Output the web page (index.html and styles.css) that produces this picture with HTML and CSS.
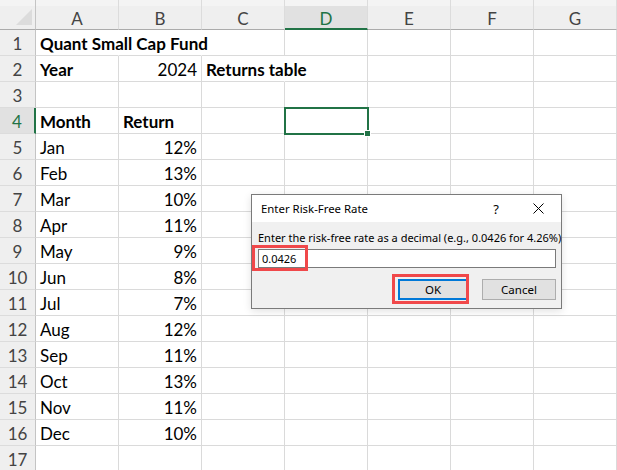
FILE: index.html
```html
<!DOCTYPE html>
<html>
<head>
<meta charset="utf-8">
<link rel="stylesheet" href="styles.css">
</head>
<body>
<div class="sheet">
  <div class="corner"><span class="tri"></span></div>
  <div class="ch">A</div><div class="ch">B</div><div class="ch">C</div><div class="ch sel">D</div><div class="ch">E</div><div class="ch">F</div><div class="ch">G</div>

  <div class="rh">1</div><div class="c b nr">Quant Small Cap Fund</div><div class="c nr"></div><div class="c"></div><div class="c"></div><div class="c"></div><div class="c"></div><div class="c"></div>
  <div class="rh">2</div><div class="c b">Year</div><div class="c r">2024</div><div class="c b nr">Returns table</div><div class="c"></div><div class="c"></div><div class="c"></div><div class="c"></div>
  <div class="rh">3</div><div class="c"></div><div class="c"></div><div class="c"></div><div class="c"></div><div class="c"></div><div class="c"></div><div class="c"></div>
  <div class="rh sel">4</div><div class="c b">Month</div><div class="c b">Return</div><div class="c"></div><div class="c active"></div><div class="c"></div><div class="c"></div><div class="c"></div>
  <div class="rh">5</div><div class="c">Jan</div><div class="c r">12%</div><div class="c"></div><div class="c"></div><div class="c"></div><div class="c"></div><div class="c"></div>
  <div class="rh">6</div><div class="c">Feb</div><div class="c r">13%</div><div class="c"></div><div class="c"></div><div class="c"></div><div class="c"></div><div class="c"></div>
  <div class="rh">7</div><div class="c">Mar</div><div class="c r">10%</div><div class="c"></div><div class="c"></div><div class="c"></div><div class="c"></div><div class="c"></div>
  <div class="rh">8</div><div class="c">Apr</div><div class="c r">11%</div><div class="c"></div><div class="c"></div><div class="c"></div><div class="c"></div><div class="c"></div>
  <div class="rh">9</div><div class="c">May</div><div class="c r">9%</div><div class="c"></div><div class="c"></div><div class="c"></div><div class="c"></div><div class="c"></div>
  <div class="rh">10</div><div class="c">Jun</div><div class="c r">8%</div><div class="c"></div><div class="c"></div><div class="c"></div><div class="c"></div><div class="c"></div>
  <div class="rh">11</div><div class="c">Jul</div><div class="c r">7%</div><div class="c"></div><div class="c"></div><div class="c"></div><div class="c"></div><div class="c"></div>
  <div class="rh">12</div><div class="c">Aug</div><div class="c r">12%</div><div class="c"></div><div class="c"></div><div class="c"></div><div class="c"></div><div class="c"></div>
  <div class="rh">13</div><div class="c">Sep</div><div class="c r">11%</div><div class="c"></div><div class="c"></div><div class="c"></div><div class="c"></div><div class="c"></div>
  <div class="rh">14</div><div class="c">Oct</div><div class="c r">13%</div><div class="c"></div><div class="c"></div><div class="c"></div><div class="c"></div><div class="c"></div>
  <div class="rh">15</div><div class="c">Nov</div><div class="c r">11%</div><div class="c"></div><div class="c"></div><div class="c"></div><div class="c"></div><div class="c"></div>
  <div class="rh">16</div><div class="c">Dec</div><div class="c r">10%</div><div class="c"></div><div class="c"></div><div class="c"></div><div class="c"></div><div class="c"></div>
  <div class="rh">17</div><div class="c"></div><div class="c"></div><div class="c"></div><div class="c"></div><div class="c"></div><div class="c"></div><div class="c"></div>
</div>

<div class="dialog">
  <div class="titlebar">
    <span class="title">Enter Risk-Free Rate</span>
    <span class="help">?</span>
    <svg class="close" width="11" height="11" viewBox="0 0 11 11"><path d="M0.5 0.5 L10.5 10.5 M10.5 0.5 L0.5 10.5" stroke="#000" stroke-width="1" fill="none"/></svg>
  </div>
  <div class="dbody">
    <div class="label">Enter the risk-free rate as a decimal (e.g., 0.0426 for 4.26%)</div>
    <div class="input">0.0426</div>
    <div class="buttons">
      <div class="btn default">OK</div>
      <div class="btn">Cancel</div>
    </div>
  </div>
  <div class="mark mark-input"></div>
  <div class="mark mark-ok"></div>
</div>
</body>
</html>
```

FILE: styles.css
```css
html, body {
  margin: 0;
  padding: 0;
  background: #fff;
  overflow: hidden;
}
body {
  width: 617px;
  height: 470px;
  position: relative;
}
.sheet {
  display: grid;
  grid-template-columns: 36px repeat(7, 83px);
  grid-template-rows: 30px repeat(17, 26px);
  font-family: Lato, "Liberation Sans", sans-serif;
  font-size: 17px;
  color: #000;
}
.corner {
  background: linear-gradient(#f4f4f4 0 6px, #efefef 6px);
  border-right: 1px solid #c4c4c4;
  border-bottom: 1px solid #ababab;
  box-sizing: border-box;
  position: relative;
}
.tri {
  position: absolute;
  right: 3px;
  bottom: 4px;
  width: 0;
  height: 0;
  border-left: 16px solid transparent;
  border-bottom: 16px solid #dcdcdc;
}
.ch {
  background: linear-gradient(#f4f4f4 0 6px, #efefef 6px);
  border-right: 1px solid #dcdcdc;
  border-bottom: 1px solid #ababab;
  box-sizing: border-box;
  display: flex;
  align-items: center;
  justify-content: center;
  padding-top: 8px;
  color: #444;
  font-size: 17px;
}
.ch.sel {
  background: linear-gradient(#f4f4f4 0 6px, #e1e1e1 6px);
  border-bottom: 2px solid #217346;
  color: #217346;
  padding-top: 9px;
}
.rh {
  background: #efefef;
  border-right: 1px solid #c4c4c4;
  border-bottom: 1px solid #dcdcdc;
  box-sizing: border-box;
  display: flex;
  align-items: flex-end;
  justify-content: center;
  padding-bottom: 1px;
  color: #444;
}
.rh.sel {
  background: #e1e1e1;
  border-right: 2px solid #217346;
  color: #217346;
}
.c {
  border-right: 1px solid #dadada;
  border-bottom: 1px solid #dadada;
  box-sizing: border-box;
  display: flex;
  align-items: flex-end;
  padding: 0 3px 1px 4px;
  white-space: nowrap;
  overflow: visible;
}
.c.nr { border-right-color: transparent; }
.c.b { font-weight: 700; }
.c.r { justify-content: flex-end; padding-right: 4px; }
.c.active {
  outline: 2px solid #217346;
  outline-offset: -1px;
  position: relative;
}
.c.active::after {
  content: "";
  position: absolute;
  right: -4px;
  bottom: -4px;
  width: 5px;
  height: 5px;
  background: #217346;
  border: 1px solid #fff;
}

.dialog {
  position: absolute;
  left: 251px;
  top: 194px;
  width: 311px;
  height: 115px;
  box-sizing: border-box;
  border: 1px solid #7a7a7a;
  background: #f0f0f0;
  font-family: "Noto Sans", "Open Sans", sans-serif;
  font-size: 11px;
  color: #000;
  box-shadow: 0 2px 8px rgba(0,0,0,0.12);
}
.titlebar {
  height: 27px;
  background: #fff;
  display: flex;
  align-items: center;
  padding-left: 9px;
  padding-right: 17px;
}
.title { flex: 1; font-size: 11.4px; }
.help { margin-right: 34px; font-size: 13px; }
.close { display: block; }
.dbody {
  padding: 8px 5px 0 6px;
}
.label {
  white-space: nowrap;
  line-height: 16px;
}
.input {
  margin-top: 3px;
  height: 19px;
  box-sizing: border-box;
  border: 1px solid #7a7a7a;
  background: #fff;
  padding-left: 3px;
  line-height: 17px;
}
.buttons {
  display: flex;
  justify-content: flex-end;
  gap: 14px;
  margin-top: 11px;
}
.btn {
  width: 74px;
  height: 21px;
  box-sizing: border-box;
  border: 1px solid #adadad;
  background: #e1e1e1;
  display: flex;
  align-items: center;
  justify-content: center;
  font-size: 11.5px;
}
.btn.default {
  width: 70px;
  border: 2px solid #0078d7;
}
.mark {
  position: absolute;
  border: 3px solid #f0484a;
  box-sizing: border-box;
}
.mark-input {
  left: 0px;
  top: 50px;
  width: 56px;
  height: 26px;
}
.mark-ok {
  left: 140px;
  top: 79px;
  width: 77px;
  height: 30px;
}
```
